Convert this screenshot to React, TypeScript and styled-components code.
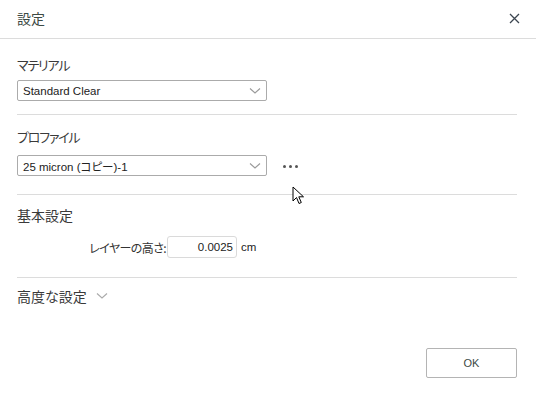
import React from "react";
import styled, { createGlobalStyle } from "styled-components";

const Global = createGlobalStyle`
  html, body { margin: 0; padding: 0; background: #fff; }
  body { font-family: "Liberation Sans", "Noto Sans CJK JP", sans-serif; color: #333; }
  * { box-sizing: border-box; }
`;

const Dialog = styled.div`
  position: relative;
  width: 536px;
  height: 395px;
  background: #fff;
  display: flex;
  flex-direction: column;
`;

const Header = styled.div`
  height: 39px;
  border-bottom: 1px solid #dcdcdc;
  display: flex;
  align-items: center;
  justify-content: space-between;
  padding: 0 17px 2px 17px;
`;

const Title = styled.div`
  font-size: 14px;
  color: #3c4a44;
  font-family: "Noto Sans CJK JP", sans-serif;
  font-feature-settings: "palt";
`;

const Close = styled.button`
  border: none;
  background: none;
  padding: 0;
  width: 14px;
  height: 14px;
  display: flex;
  align-items: center;
  justify-content: center;
  margin-right: -2px;
`;

const Body = styled.div`
  flex: 1;
  padding: 16px 19px 0 17px;
  display: flex;
  flex-direction: column;
`;

const Section = styled.div<{ $pb: number; $mb: number }>`
  padding-bottom: ${(p) => p.$pb}px;
  border-bottom: 1px solid #dcdcdc;
  margin-bottom: ${(p) => p.$mb}px;
`;

const Label = styled.div<{ $mb: number; $kana?: boolean }>`
  font-family: "Noto Sans CJK JP", sans-serif;
  font-feature-settings: "palt";
  font-size: ${(p) => (p.$kana ? 13 : 14)}px;
  letter-spacing: ${(p) => (p.$kana ? "-1.2px" : "0")};
  line-height: 20px;
  color: #3a3a3a;
  margin-bottom: ${(p) => p.$mb}px;
`;

const Row = styled.div`
  display: flex;
  align-items: center;
  gap: 16px;
`;

const Select = styled.div`
  width: 250px;
  height: 21px;
  border: 1px solid #ababab;
  border-radius: 2px;
  display: flex;
  align-items: center;
  justify-content: space-between;
  padding: 0 5px 0 5px;
  font-size: 11.5px;
  color: #222;
  font-family: "Liberation Sans", "Noto Sans CJK JP", sans-serif;
  font-feature-settings: "palt";
`;

const Dots = styled.div`
  display: flex;
  gap: 3px;
  padding-top: 2px;
`;

const Dot = styled.span`
  width: 3px;
  height: 3px;
  border-radius: 50%;
  background: #555;
`;

const FieldRow = styled.div`
  display: flex;
  align-items: center;
  margin-top: 11px;
`;

const FieldLabel = styled.div`
  width: 150px;
  text-align: right;
  font-family: "Noto Sans CJK JP", sans-serif;
  font-feature-settings: "palt";
  font-size: 12px;
  letter-spacing: -0.6px;
  color: #333;
  padding-right: 1px;
`;

const NumInput = styled.div`
  width: 70px;
  height: 22px;
  border: 1px solid #dadada;
  border-radius: 3px;
  text-align: right;
  padding: 0 3px;
  font-size: 11.5px;
  line-height: 20px;
  color: #222;
`;

const Unit = styled.span`
  font-size: 11.5px;
  margin-left: 4px;
  color: #222;
`;

const Advanced = styled.div`
  display: flex;
  align-items: center;
  gap: 9px;
  font-family: "Noto Sans CJK JP", sans-serif;
  font-feature-settings: "palt";
  font-size: 14px;
  color: #3a3a3a;
  line-height: 20px;
`;

const Footer = styled.div`
  display: flex;
  justify-content: flex-end;
  padding: 0 19px 17px 0;
`;

const OkButton = styled.button`
  width: 91px;
  height: 30px;
  border: 1px solid #b4b4b4;
  border-radius: 2px;
  background: #fff;
  font-family: "Liberation Sans", sans-serif;
  font-size: 11px;
  color: #3c4a44;
`;

const Cursor = styled.svg`
  position: absolute;
  left: 292px;
  top: 186px;
`;

const Chevron = ({ color = "#9a9a9a" }: { color?: string }) => (
  <svg width="12" height="8" viewBox="0 0 12 8">
    <path d="M1 1.5 L6 6 L11 1.5" fill="none" stroke={color} strokeWidth="1.1" />
  </svg>
);

export default function App() {
  return (
    <>
      <Global />
      <Dialog>
        <Header>
          <Title>設定</Title>
          <Close>
            <svg width="11" height="11" viewBox="0 0 11 11">
              <path d="M1 1 L10 10 M10 1 L1 10" stroke="#3c4650" strokeWidth="1.3" />
            </svg>
          </Close>
        </Header>
        <Body>
          <Section $pb={13} $mb={12}>
            <Label $mb={5} $kana>マテリアル</Label>
            <Select>
              <span>Standard Clear</span>
              <Chevron />
            </Select>
          </Section>
          <Section $pb={18} $mb={10}>
            <Label $mb={8} $kana>プロファイル</Label>
            <Row>
              <Select>
                <span>25 micron (コピー)-1</span>
                <Chevron />
              </Select>
              <Dots>
                <Dot />
                <Dot />
                <Dot />
              </Dots>
            </Row>
          </Section>
          <Section $pb={19} $mb={8}>
            <Label $mb={6}>基本設定</Label>
            <FieldRow>
              <FieldLabel>レイヤーの高さ:</FieldLabel>
              <NumInput>0.0025</NumInput>
              <Unit>cm</Unit>
            </FieldRow>
          </Section>
          <Advanced>
            <span>高度な設定</span>
            <Chevron color="#aaa" />
          </Advanced>
        </Body>
        <Footer>
          <OkButton>OK</OkButton>
        </Footer>
        <Cursor width="14" height="20" viewBox="0 0 14 20">
          <path d="M1 1 L1 15 L4.5 11.5 L7 17.5 L9.3 16.5 L6.8 10.8 L11.5 10.8 Z" fill="#fff" stroke="#000" strokeWidth="1" strokeLinejoin="round" />
        </Cursor>
      </Dialog>
    </>
  );
}
